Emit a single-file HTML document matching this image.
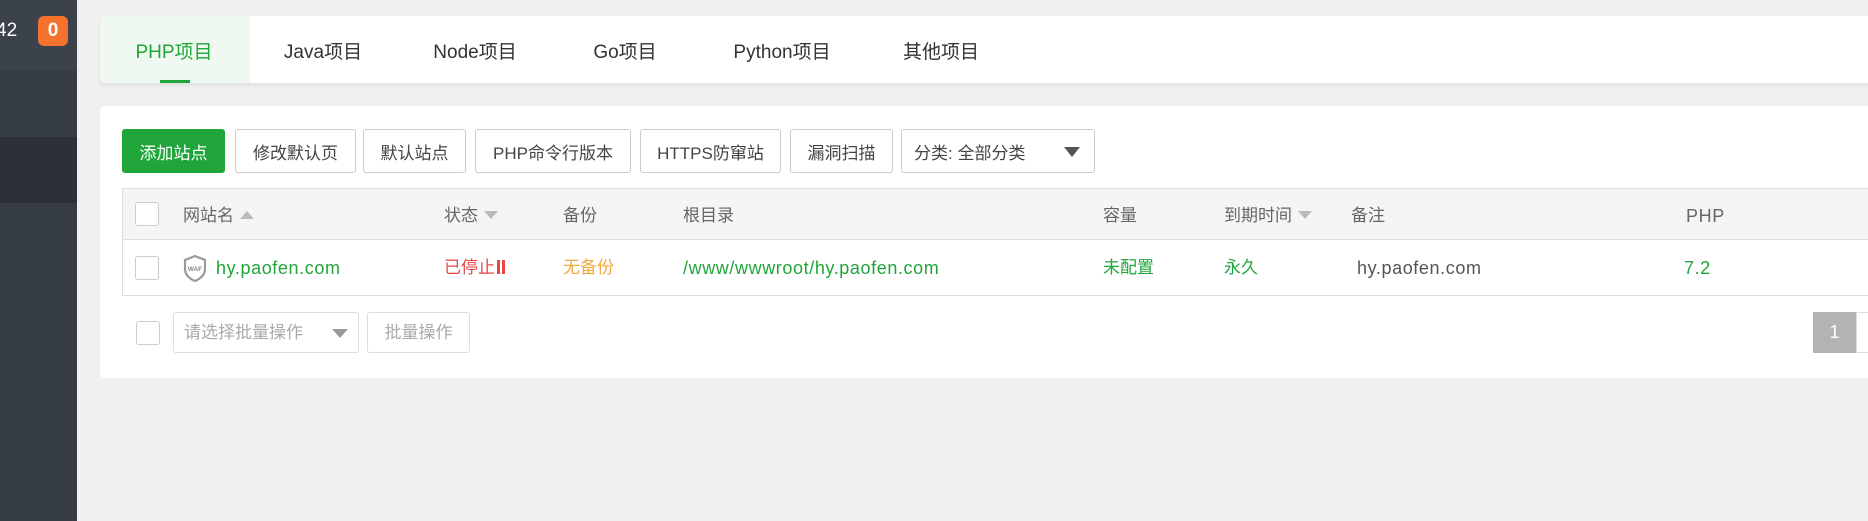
<!DOCTYPE html>
<html><head><meta charset="utf-8"><style>
*{box-sizing:border-box;margin:0;padding:0}
body{width:1868px;height:521px;overflow:hidden;background:#f0f0f0;font-family:"Liberation Sans","Noto Sans CJK SC",sans-serif;font-size:16px;color:#333;position:relative}
.abs{position:absolute}
.side{left:0;top:0;width:77px;height:521px;background:#363c44}
.btn{position:absolute;top:129px;height:44px;border:1px solid #ccc;border-radius:3px;background:#fff;display:flex;align-items:center;justify-content:center;font-size:17px;color:#444;white-space:nowrap}
.cb{position:absolute;width:24px;height:24px;border:1px solid #ccc;border-radius:3px;background:#fff}
.th{position:absolute;top:202px;height:28px;line-height:28px;color:#666;font-size:17px;white-space:nowrap}
.td{position:absolute;top:254px;height:28px;line-height:28px;font-size:17px;white-space:nowrap}
.lat{font-size:18px;letter-spacing:.6px}
.tri-up{display:inline-block;width:0;height:0;border-left:7px solid transparent;border-right:7px solid transparent;border-bottom:8px solid #bbb;margin-left:6px;vertical-align:2px}
.tri-dn{display:inline-block;width:0;height:0;border-left:7px solid transparent;border-right:7px solid transparent;border-top:8px solid #bbb;margin-left:6px;vertical-align:2px}
.tab{position:absolute;top:39px;height:28px;line-height:28px;transform:translateX(-50%);font-size:19px;color:#333;white-space:nowrap}
.g{color:#20a53a}
</style></head><body>
<div class="abs side"></div>
<div class="abs" style="left:0;top:0;width:77px;height:70px;background:#3c424b"></div>
<div class="abs" style="left:0;top:137px;width:77px;height:66px;background:#2c3038"></div>
<div class="abs" style="left:-4px;top:20px;color:#fff;font-size:19px">42</div>
<div class="abs" style="left:38px;top:16px;width:30px;height:30px;background:#f5712c;border-radius:6px;color:#fff;font-weight:bold;font-size:19px;text-align:center;line-height:30px">0</div>

<div class="abs" style="left:100px;top:16px;width:1780px;height:67px;background:#fff;border-radius:5px;box-shadow:0 2px 4px rgba(0,0,0,.08)"></div>
<div class="abs" style="left:100px;top:16px;width:150px;height:67px;background:#eff8f1;border-radius:5px 0 0 5px"></div>
<div class="abs" style="left:160px;top:80px;width:30px;height:3px;background:#20a53a"></div>
<div class="tab g" style="left:174px">PHP项目</div>
<div class="tab" style="left:323px">Java项目</div>
<div class="tab" style="left:475px">Node项目</div>
<div class="tab" style="left:625px">Go项目</div>
<div class="tab" style="left:782px">Python项目</div>
<div class="tab" style="left:941px">其他项目</div>

<div class="abs" style="left:100px;top:106px;width:1780px;height:272px;background:#fff;border-radius:5px"></div>
<div class="btn" style="left:122px;width:103px;background:#20a53a;border-color:#20a53a;color:#fff">添加站点</div>
<div class="btn" style="left:235px;width:121px">修改默认页</div>
<div class="btn" style="left:363px;width:103px">默认站点</div>
<div class="btn" style="left:475px;width:156px">PHP命令行版本</div>
<div class="btn" style="left:640px;width:141px">HTTPS防窜站</div>
<div class="btn" style="left:790px;width:103px">漏洞扫描</div>
<div class="btn" style="left:901px;width:194px;justify-content:flex-start;padding-left:12px">分类: 全部分类<span style="position:absolute;right:14px;top:17px;border-left:8px solid transparent;border-right:8px solid transparent;border-top:10px solid #555"></span></div>

<div class="abs" style="left:122px;top:188px;width:1760px;height:108px;border:1px solid #ddd;border-right:none"></div>
<div class="abs" style="left:123px;top:189px;width:1760px;height:51px;background:#f5f5f5;border-bottom:1px solid #ddd"></div>
<div class="cb" style="left:135px;top:202px"></div>
<div class="th" style="left:183px">网站名<span class="tri-up"></span></div>
<div class="th" style="left:444px">状态<span class="tri-dn"></span></div>
<div class="th" style="left:563px">备份</div>
<div class="th" style="left:683px">根目录</div>
<div class="th" style="left:1103px">容量</div>
<div class="th" style="left:1224px">到期时间<span class="tri-dn"></span></div>
<div class="th" style="left:1351px">备注</div>
<div class="th lat" style="left:1686px">PHP</div>

<div class="cb" style="left:135px;top:256px"></div>
<svg class="abs" style="left:182px;top:254px" width="26" height="28" viewBox="0 0 26 28"><path d="M13 2 L23 6 V15 C23 21 18 25 13 27 C8 25 3 21 3 15 V6 Z" fill="#fff" stroke="#999" stroke-width="2.2"/><text x="13" y="17" font-size="6.5" font-weight="bold" fill="#888" text-anchor="middle" font-family="Liberation Sans">WAF</text></svg>
<div class="td g lat" style="left:216px">hy.paofen.com</div>
<div class="td" style="left:444px;color:#e64646">已停止<span style="display:inline-block;width:3px;height:14px;background:#e64646;margin-left:2px;vertical-align:-1px"></span><span style="display:inline-block;width:3px;height:14px;background:#e64646;margin-left:2px;vertical-align:-1px"></span></div>
<div class="td" style="left:563px;color:#f0a93e">无备份</div>
<div class="td g lat" style="left:683px">/www/wwwroot/hy.paofen.com</div>
<div class="td g" style="left:1103px">未配置</div>
<div class="td g" style="left:1224px">永久</div>
<div class="td lat" style="left:1357px;color:#555">hy.paofen.com</div>
<div class="td g lat" style="left:1684px">7.2</div>

<div class="cb" style="left:136px;top:321px"></div>
<div class="abs" style="left:173px;top:312px;width:186px;height:41px;border:1px solid #ddd;border-radius:3px;color:#aaa;padding-left:10px;line-height:39px;font-size:17px">请选择批量操作<span style="position:absolute;right:10px;top:16px;border-left:8px solid transparent;border-right:8px solid transparent;border-top:9px solid #999"></span></div>
<div class="abs" style="left:367px;top:312px;width:103px;height:41px;border:1px solid #ddd;border-radius:3px;color:#aaa;text-align:center;line-height:39px;font-size:17px">批量操作</div>
<div class="abs" style="left:1813px;top:312px;width:43px;height:41px;background:#b3b3b3;color:#fff;text-align:center;line-height:41px;font-size:18px">1</div>
<div class="abs" style="left:1856px;top:312px;width:14px;height:41px;border:1px solid #ddd;background:#fff"></div>
</body></html>
